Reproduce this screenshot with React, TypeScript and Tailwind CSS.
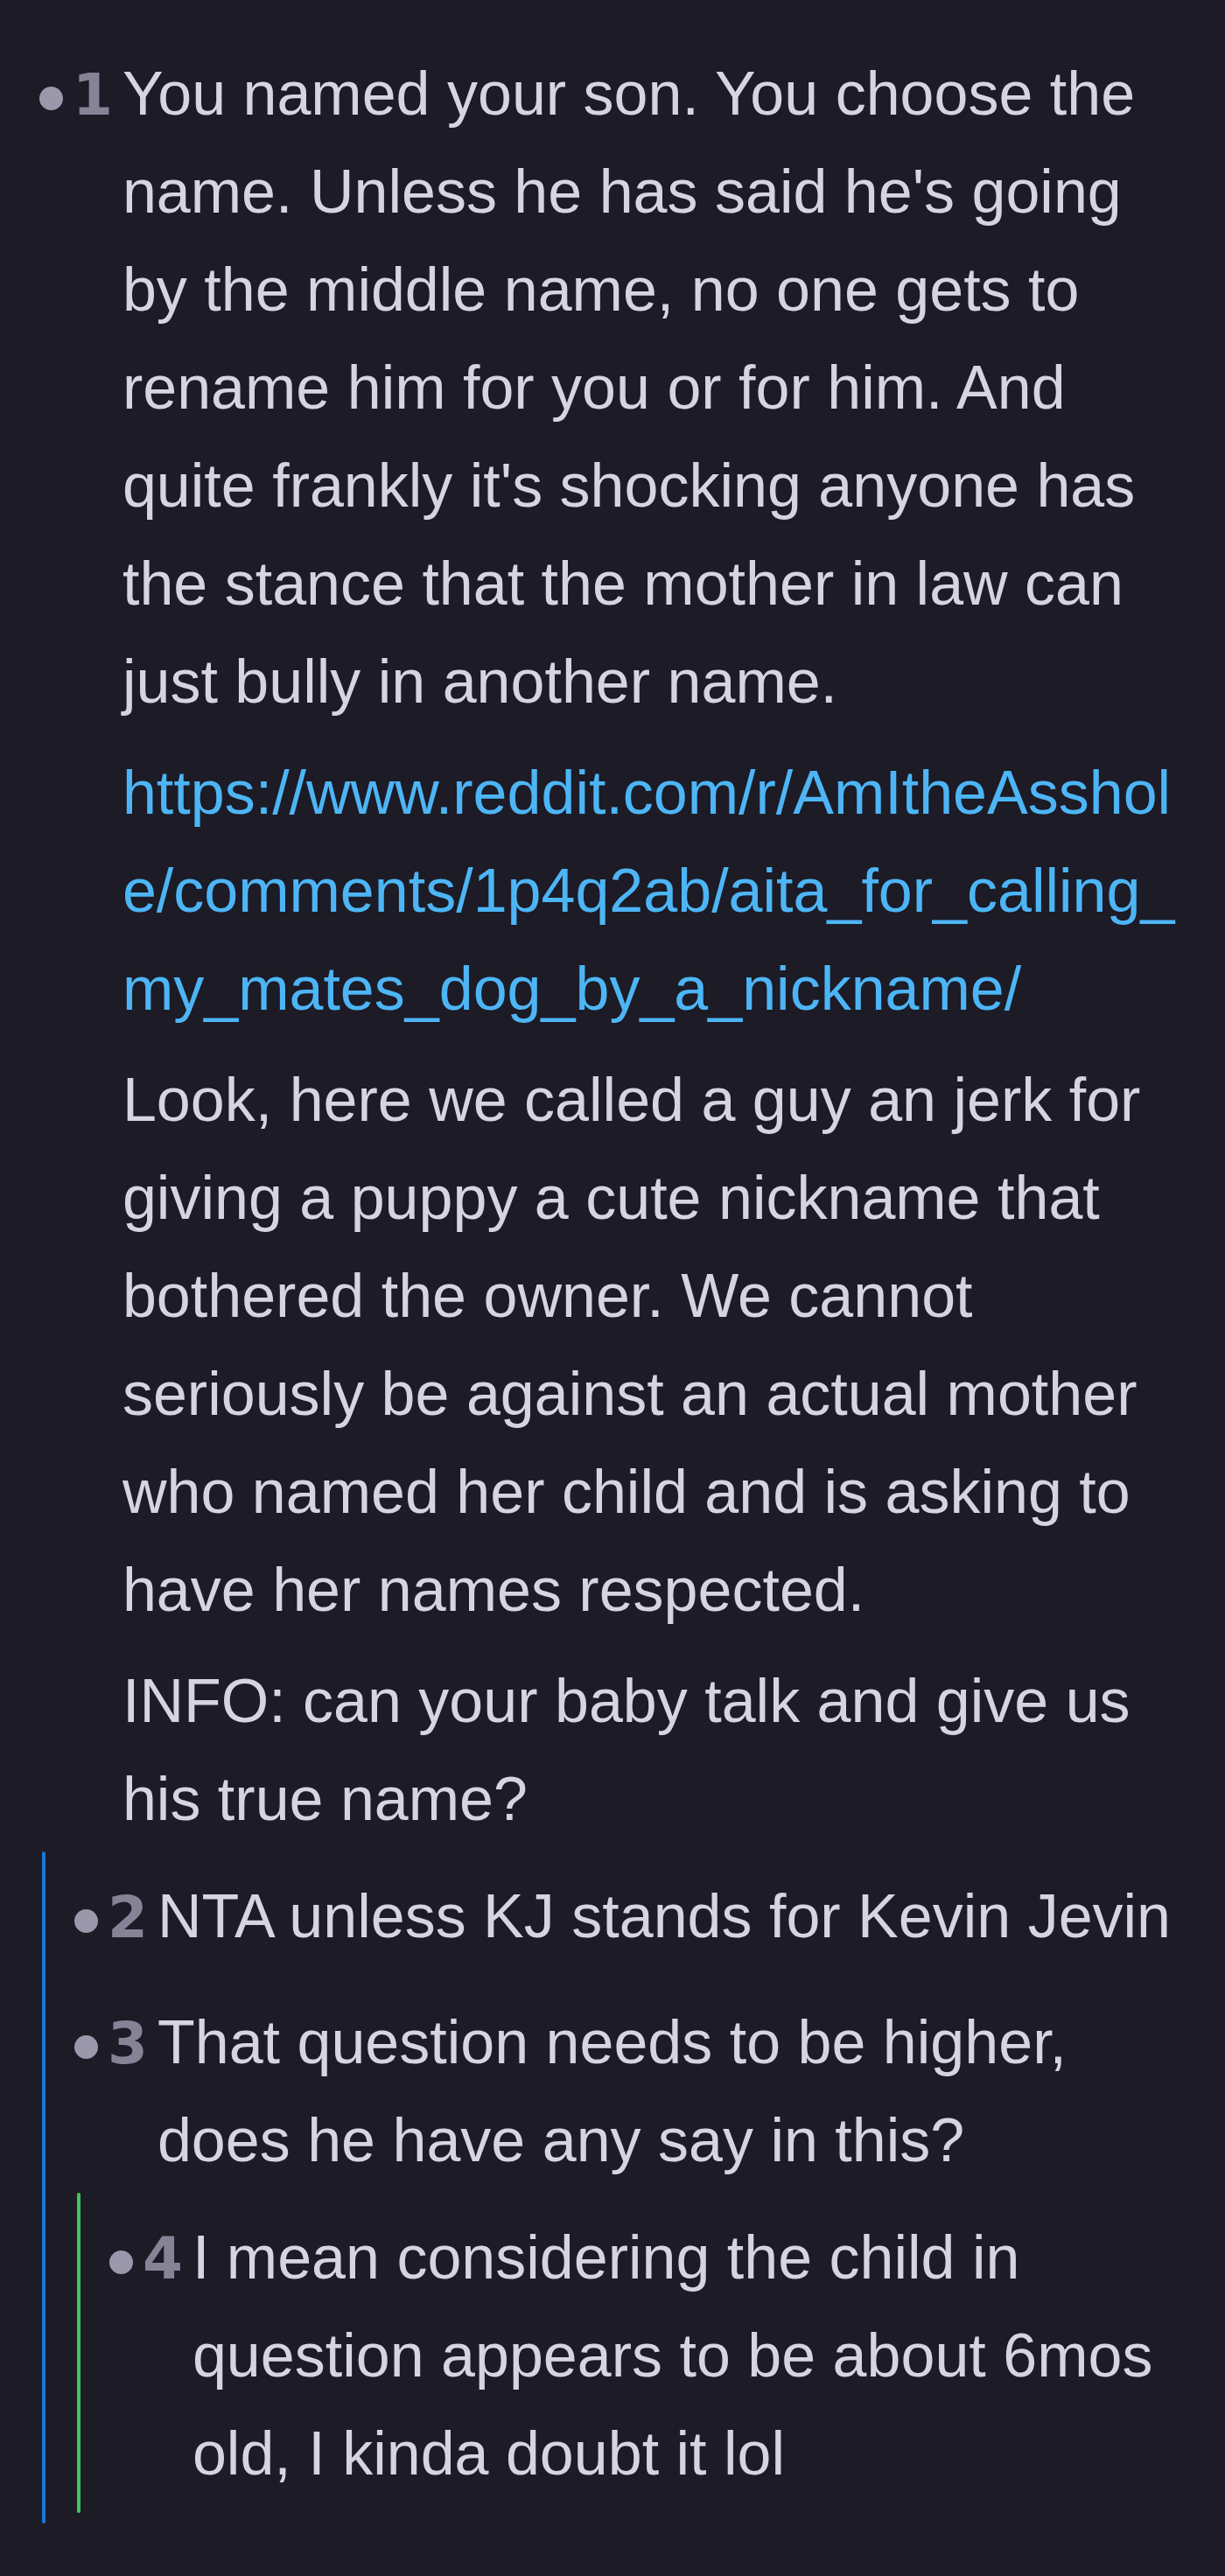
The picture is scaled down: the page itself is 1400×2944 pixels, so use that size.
import React from "react";

type Node = {
  n: number;
  paras: { text: string; link?: boolean }[];
  line?: string;
  children?: Node[];
};

const data: Node = {
  n: 1,
  paras: [
    {
      text: "You named your son. You choose the name. Unless he has said he's going by the middle name, no one gets to rename him for you or for him. And quite frankly it's shocking anyone has the stance that the mother in law can just bully in another name.",
    },
    {
      text: "https://www.reddit.com/r/AmItheAsshole/comments/1p4q2ab/aita_for_calling_my_mates_dog_by_a_nickname/",
      link: true,
    },
    {
      text: "Look, here we called a guy an jerk for giving a puppy a cute nickname that bothered the owner. We cannot seriously be against an actual mother who named her child and is asking to have her names respected.",
    },
    { text: "INFO: can your baby talk and give us his true name?" },
  ],
  line: "blue",
  children: [
    { n: 2, paras: [{ text: "NTA unless KJ stands for Kevin Jevin" }] },
    {
      n: 3,
      paras: [{ text: "That question needs to be higher, does he have any say in this?" }],
      line: "green",
      children: [
        {
          n: 4,
          paras: [
            {
              text: "I mean considering the child in question appears to be about 6mos old, I kinda doubt it lol",
            },
          ],
        },
      ],
    },
  ],
};

function Comment({ node }: { node: Node }) {
  return (
    <div className="pt-[18px] pb-[12px]">
      <div className="flex items-baseline">
        <span className="self-start mt-[48px] w-[27px] h-[27px] rounded-full bg-[#9a98aa] shrink-0" />
        <span className="ml-[11px] shrink-0 font-bold text-[66px] leading-[112px] text-[#858396] font-['DejaVu_Sans',sans-serif]">
          {node.n}
        </span>
        <div className="ml-[11px] flex-1 min-w-0 flex flex-col gap-[15px] text-[70px] leading-[112px] text-[#d6d4e3]">
          {node.paras.map((p, i) =>
            p.link ? (
              <p key={i} className="break-all text-[#4db5f5]">
                {p.text}
              </p>
            ) : (
              <p key={i}>{p.text}</p>
            )
          )}
        </div>
      </div>
      {node.children && (
        <div className="mt-[4px] flex">
          <div
            className={
              node.line === "green"
                ? "ml-[3px] w-[4px] shrink-0 rounded-full bg-[#3fc75c]"
                : "ml-[3px] w-[4px] shrink-0 rounded-full bg-[#1a78d6]"
            }
          />
          <div className="flex-1 min-w-0 pl-[33px]">
            {node.children.map((c) => (
              <Comment key={c.n} node={c} />
            ))}
          </div>
        </div>
      )}
    </div>
  );
}

export default function App() {
  return (
    <div className="min-h-screen bg-[#1c1b26] pt-[33px] pl-[45px] pr-[45px] font-['Liberation_Sans',Arial,sans-serif]">
      <Comment node={data} />
    </div>
  );
}
